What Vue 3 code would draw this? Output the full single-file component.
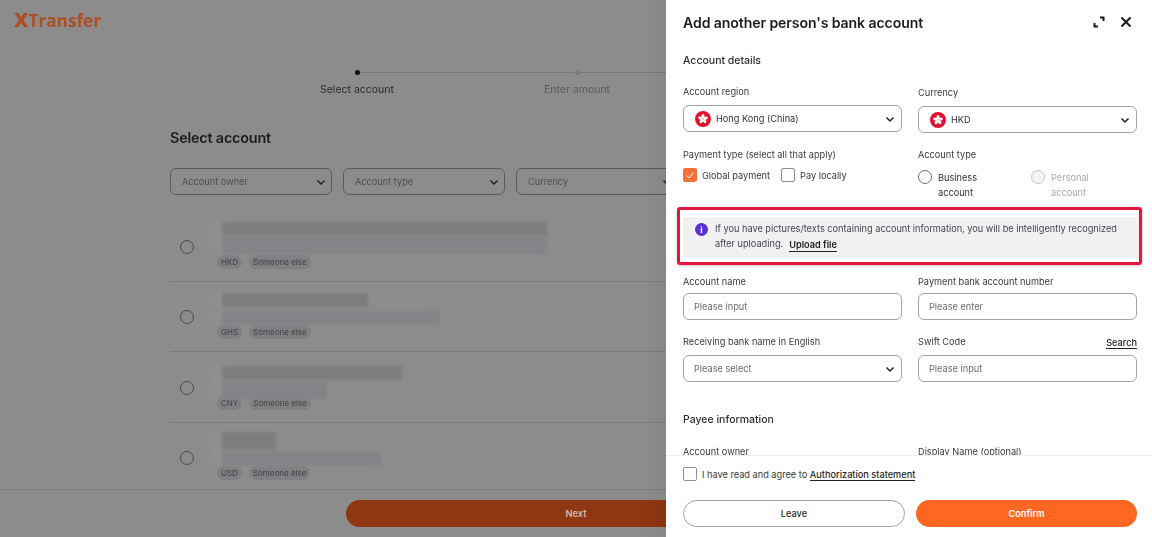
<script setup>
const steps = ["Select account", "Enter amount", "Confirm"];
const filters = ["Account owner", "Account type", "Currency"];
const accounts = [
  { currency: "HKD", top: 325, bottom: 325, topH: 14, gap: 0, bottomH: 18, lift: 1 },
  { currency: "GHS", top: 146, bottom: 218, topH: 14, gap: 4, bottomH: 14, lift: 0 },
  { currency: "CNY", top: 180, bottom: 105, topH: 14, gap: 1, bottomH: 18, lift: -3 },
  { currency: "USD", top: 54, bottom: 159, topH: 18, gap: 1, bottomH: 15, lift: 0 },
];
const petals = [0, 72, 144, 216, 288];
</script>

<template>
  <div class="screen">
    <div class="page">
      <header class="logo"><span class="logo-x">X</span>Transfer</header>

      <main class="main">
        <ol class="steps">
          <li v-for="(step, i) in steps" :key="step" class="step" :class="{ current: i === 0 }">
            <span class="step-dot"></span>
            <span class="step-label">{{ step }}</span>
          </li>
        </ol>

        <h2 class="page-title">Select account</h2>

        <div class="filters">
          <div v-for="f in filters" :key="f" class="filter">
            <span>{{ f }}</span>
            <svg class="chev" viewBox="0 0 12 12" width="12" height="12"><path d="M2.500 4.500l3.500 3.500 3.500-3.500" /></svg>
          </div>
        </div>

        <div class="rows">
          <div v-for="a in accounts" :key="a.currency" class="row">
            <span class="row-radio"></span>
            <div class="row-body">
              <div :style="{ marginBottom: a.lift + 'px' }">
                <div class="smudge dark" :style="{ width: a.top + 'px', height: a.topH + 'px' }"></div>
                <div class="smudge light" :style="{ width: a.bottom + 'px', height: a.bottomH + 'px', marginTop: a.gap + 'px' }"></div>
              </div>
              <div class="tags">
                <span class="tag">{{ a.currency }}</span>
                <span class="tag">Someone else</span>
              </div>
            </div>
          </div>
        </div>
      </main>

      <footer class="page-foot">
        <button class="next">Next</button>
      </footer>
    </div>

    <aside class="drawer">
      <div class="drawer-head">
        <h1>Add another person's bank account</h1>
        <div class="head-icons">
          <svg viewBox="0 0 12 12" width="12" height="12" class="ico"><path d="M7 1.500h3.500v3.500M1.500 7v3.500h3.500" /></svg>
          <svg viewBox="0 0 12 12" width="12" height="12" class="ico"><path d="M1.500 1.500l9 9M10.500 1.500l-9 9" /></svg>
        </div>
      </div>

      <div class="drawer-body">
        <h3 class="section first">Account details</h3>

        <div class="grid">
          <div class="field">
            <label>Account region</label>
            <div class="box select">
              <svg class="flag" viewBox="0 0 16 16" width="16" height="16">
                <circle cx="8" cy="8" r="8" fill="#e2112f" />
                <ellipse v-for="p in petals" :key="p" cx="8" cy="5.300" rx="1.500" ry="2.300" fill="#fff" :transform="`rotate(${p} 8 8)`" />
              </svg>
              <span class="value">Hong Kong (China)</span>
              <svg class="chev" viewBox="0 0 12 12" width="12" height="12"><path d="M2.500 4.500l3.500 3.500 3.500-3.500" /></svg>
            </div>
          </div>
          <div class="field nudge">
            <label>Currency</label>
            <div class="box select">
              <svg class="flag" viewBox="0 0 16 16" width="16" height="16">
                <circle cx="8" cy="8" r="8" fill="#e2112f" />
                <ellipse v-for="p in petals" :key="p" cx="8" cy="5.300" rx="1.500" ry="2.300" fill="#fff" :transform="`rotate(${p} 8 8)`" />
              </svg>
              <span class="value">HKD</span>
              <svg class="chev" viewBox="0 0 12 12" width="12" height="12"><path d="M2.500 4.500l3.500 3.500 3.500-3.500" /></svg>
            </div>
          </div>

          <div class="field types">
            <label>Payment type (select all that apply)</label>
            <div class="checks">
              <span class="check on">
                <svg viewBox="0 0 14 14" width="14" height="14"><path d="M3.500 7.500l2.500 2.500 4.500-5.500" /></svg>
              </span>
              <span class="check-text">Global payment</span>
              <span class="check second"></span>
              <span class="check-text">Pay locally</span>
            </div>
          </div>
          <div class="field types">
            <label>Account type</label>
            <div class="radios">
              <div class="radio-item">
                <span class="radio"></span>
                <span class="radio-text">Business<br />account</span>
              </div>
              <div class="radio-item off">
                <span class="radio"></span>
                <span class="radio-text">Personal<br />account</span>
              </div>
            </div>
          </div>
        </div>

        <div class="highlight">
          <div class="notice">
            <span class="info">i</span>
            <div class="notice-text">
              <div>If you have pictures/texts containing account information, you will be intelligently recognized</div>
              <div class="notice-second">
                <span>after uploading.</span>
                <a>Upload file</a>
              </div>
            </div>
          </div>
        </div>

        <div class="grid lower">
          <div class="field">
            <label>Account name</label>
            <div class="box"><span class="hint">Please input</span></div>
          </div>
          <div class="field">
            <label>Payment bank account number</label>
            <div class="box"><span class="hint">Please enter</span></div>
          </div>
          <div class="field tall">
            <label>Receiving bank name in English</label>
            <div class="box select">
              <span class="hint">Please select</span>
              <svg class="chev" viewBox="0 0 12 12" width="12" height="12"><path d="M2.500 4.500l3.500 3.500 3.500-3.500" /></svg>
            </div>
          </div>
          <div class="field tall">
            <label class="split">Swift Code <a>Search</a></label>
            <div class="box"><span class="hint">Please input</span></div>
          </div>
        </div>

        <h3 class="section">Payee information</h3>
        <div class="grid payee">
          <div class="field"><label>Account owner</label></div>
          <div class="field"><label>Display Name (optional)</label></div>
        </div>
      </div>

      <div class="drawer-foot">
        <div class="agree">
          <span class="check"></span>
          <span class="check-text">I have read and agree to <a>Authorization statement</a></span>
        </div>
        <div class="actions">
          <button class="leave">Leave</button>
          <button class="confirm">Confirm</button>
        </div>
      </div>
    </aside>
  </div>
</template>

<style>
html,
body {
  margin: 0;
  background: #8c8c8c;
}
</style>

<style scoped>
.screen {
  position: relative;
  width: 1152px;
  height: 537px;
  overflow: hidden;
  font-family: Inter, "Liberation Sans", sans-serif;
  background: #8c8c8c;
}

.page {
  height: 537px;
  display: flex;
  flex-direction: column;
  filter: blur(0.5px);
  color: #2a2a2a;
}

.logo {
  height: 20px;
  padding: 10px 0 0 14px;
  font-family: "Open Sans", sans-serif;
  font-size: 17.200px;
  line-height: 20px;
  font-weight: 700;
  color: #ad4f25;
}
.logo-x {
  font-size: 20px;
  font-weight: 800;
}

.main {
  flex: 1;
  overflow: hidden;
  padding: 0 168px 0 170px;
}

.steps {
  list-style: none;
  margin: 40px 0 0 77px;
  padding: 0;
  display: flex;
}
.step {
  position: relative;
  width: 220px;
  display: flex;
  flex-direction: column;
  align-items: center;
  color: #5b5b5b;
  font-size: 10.500px;
}
.step::before {
  content: "";
  position: absolute;
  left: 50%;
  width: 100%;
  top: 2px;
  height: 1px;
  background: #787878;
}
.step:last-child::before {
  display: none;
}
.step-dot {
  position: relative;
  width: 5px;
  height: 5px;
  border-radius: 50%;
  background: #7a7a7a;
}
.step-label {
  margin-top: 7px;
  line-height: 16px;
}
.current {
  color: #2a2a2a;
}
.current .step-dot {
  background: #111;
}

.page-title {
  margin: 31px 0 0;
  font-size: 14.400px;
  line-height: 18px;
  font-weight: 600;
  color: #1c1c1c;
  letter-spacing: -0.2px;
}

.filters {
  display: flex;
  gap: 11px;
  margin-top: 21px;
}
.filter {
  flex: 0 0 162px;
  height: 27px;
  box-sizing: border-box;
  padding: 0 4px 0 11px;
  border: 1px solid #5a5a5a;
  border-radius: 6px;
  display: flex;
  align-items: center;
  justify-content: space-between;
  font-size: 9.200px;
  color: #4e4e4e;
}
.chev {
  flex: none;
  fill: none;
  stroke: #222;
  stroke-width: 1.500;
}

.rows {
  margin-top: 16px;
}
.row {
  height: 70.500px;
  box-sizing: border-box;
  border-bottom: 1px solid #7b7b7b;
  display: flex;
  align-items: center;
  padding: 2px 0 0 10px;
}
.row-radio {
  flex: none;
  width: 12px;
  height: 12px;
  border: 1px solid #4a4a4a;
  border-radius: 50%;
}
.row-body {
  margin-left: 28px;
  height: 100%;
  display: flex;
  flex-direction: column;
  justify-content: flex-end;
  padding-bottom: 12px;
  box-sizing: border-box;
}
.smudge {
  filter: blur(1.500px);
  box-shadow: -12px 0 6px rgba(255, 255, 255, 0.04);
}
.dark {
  background: #7d7d7d;
}
.light {
  background: #848488;
}
.tags {
  display: flex;
  gap: 7px;
  margin-left: -5px;
}
.tag {
  padding: 0 4px;
  border-radius: 7px;
  background: #808084;
  font-size: 8px;
  line-height: 14px;
  color: #3f3f3f;
}

.page-foot {
  flex: none;
  height: 48px;
  box-sizing: border-box;
  border-top: 1px solid #7d7d7d;
  background: #8c8c8c;
  padding: 10px 0 0 346px;
}
.next {
  display: block;
  width: 460px;
  height: 27px;
  border: 0;
  border-radius: 14px;
  background: #8f3612;
  color: #d5b9a8;
  font: 600 9.200px Inter, sans-serif;
}

.drawer {
  position: absolute;
  top: 0;
  right: 0;
  bottom: 0;
  width: 486px;
  display: flex;
  flex-direction: column;
  background: #fff;
  color: #2b2b2b;
  box-shadow: -8px 0 18px rgba(0, 0, 0, 0.05);
  filter: blur(0.25px);
}

.drawer-head {
  flex: none;
  height: 44px;
  display: flex;
  align-items: center;
  justify-content: space-between;
  padding: 0 20px 0 17px;
}
.drawer-head h1 {
  margin: 0;
  font-size: 14.100px;
  font-weight: 600;
  color: #1d1d1f;
  letter-spacing: -0.1px;
}
.head-icons {
  display: flex;
  gap: 15px;
}
.ico {
  fill: none;
  stroke: #1a1a1a;
  stroke-width: 2;
}

.drawer-body {
  flex: 1;
  min-height: 0;
  overflow: hidden;
  padding: 0 15px 0 17px;
}

.section {
  margin: 31px 0 0;
  font-size: 10.500px;
  line-height: 14px;
  font-weight: 500;
  color: #2e2e2e;
}
.section.first {
  margin-top: 10px;
}

.grid {
  display: grid;
  grid-template-columns: 219px 219px;
  column-gap: 16px;
  margin-top: 17px;
}
.field label {
  display: block;
  font-size: 9.200px;
  line-height: 14px;
  color: #3a3a3a;
  margin-bottom: 6px;
}
.field.nudge {
  padding-top: 1px;
}
.split {
  display: flex !important;
  justify-content: space-between;
}
.split a {
  font-weight: 500;
  color: #222;
  border-bottom: 1px solid #222;
  line-height: 11px;
  margin-top: 2px;
  height: 11px;
}
.box {
  height: 27px;
  box-sizing: border-box;
  border: 1px solid #a4a4a8;
  border-radius: 6px;
  display: flex;
  align-items: center;
  padding: 0 5px 0 10px;
  font-size: 9.200px;
}
.select .chev {
  margin-left: auto;
}
.flag {
  flex: none;
  margin: 0 5px 0 1px;
}
.value {
  color: #333;
}
.hint {
  color: #6d6d72;
}

.types {
  margin-top: 15px;
}
.types label {
  margin-bottom: 0;
}
.checks {
  display: flex;
  align-items: center;
  margin-top: 6px;
}
.check {
  flex: none;
  width: 14px;
  height: 14px;
  box-sizing: border-box;
  border: 1px solid #8e8e92;
  border-radius: 2px;
  display: inline-flex;
}
.check.on {
  border: 0;
  background: #f7703a;
}
.check.on svg {
  fill: none;
  stroke: #fff;
  stroke-width: 1;
}
.check.second {
  margin-left: 11px;
}
.check-text {
  margin-left: 5px;
  font-size: 9.200px;
  color: #3a3a3a;
}
.check-text a {
  color: #1f1f1f;
  font-weight: 500;
  border-bottom: 1px solid #222;
}

.radios {
  display: flex;
  margin-top: 6px;
}
.radio-item {
  flex: none;
  width: 113px;
  display: flex;
  align-items: flex-start;
}
.radio {
  flex: none;
  width: 14px;
  height: 14px;
  box-sizing: border-box;
  margin-top: 2px;
  border: 1px solid #6e6e72;
  border-radius: 50%;
}
.radio-text {
  margin: 3px 0 0 6px;
  font-size: 9.200px;
  line-height: 14.500px;
  color: #333;
}
.off .radio {
  border-color: #c9c9cc;
  background: #f4f4f5;
}
.off .radio-text {
  color: #a9a9ad;
}

.highlight {
  margin: 7px -5px 0 -6px;
  height: 58px;
  box-sizing: border-box;
  border: 3px solid #e3173d;
  border-radius: 3px;
  padding: 7px 0 5px 3px;
  box-shadow: 0 1px 3px rgba(120, 0, 20, 0.25);
}
.notice {
  display: flex;
  height: 40px;
  box-sizing: border-box;
  padding: 5px 14px 0 12px;
  background: #f1f1f4;
}
.info {
  flex: none;
  width: 13px;
  height: 13px;
  margin-top: 1px;
  border-radius: 50%;
  background: #5b2fd6;
  color: #fff;
  font-size: 9px;
  font-weight: 700;
  line-height: 13px;
  text-align: center;
}
.notice-text {
  margin-left: 7px;
  font-size: 9.200px;
  line-height: 14.500px;
  color: #45454a;
  white-space: nowrap;
}
.notice-second {
  display: flex;
  gap: 6px;
}
.notice a {
  color: #1f1f1f;
  font-weight: 600;
  line-height: 13px;
  height: 13px;
  margin-top: 1px;
  border-bottom: 1px solid #222;
}

.lower {
  margin-top: 10px;
  row-gap: 15px;
}
.lower label {
  margin-bottom: 4px;
}
.lower .tall label {
  margin-bottom: 6px;
}
.payee {
  margin-top: 18px;
}

.drawer-foot {
  flex: none;
  height: 82px;
  box-sizing: border-box;
  border-top: 1px solid #eeeeef;
  padding: 11px 15px 0 17px;
  background: #fff;
}
.agree {
  display: flex;
  align-items: center;
}
.actions {
  display: flex;
  gap: 11px;
  margin-top: 19px;
}
.actions button {
  height: 27px;
  border-radius: 14px;
  font: 600 9.200px Inter, sans-serif;
}
.actions .leave {
  width: 222px;
  border: 1px solid #a2a2a6;
  background: #fff;
  color: #2b2b2b;
  font-weight: 500;
}
.confirm {
  width: 221px;
  border: 0;
  background: #fe6722;
  color: #fff;
}
</style>
